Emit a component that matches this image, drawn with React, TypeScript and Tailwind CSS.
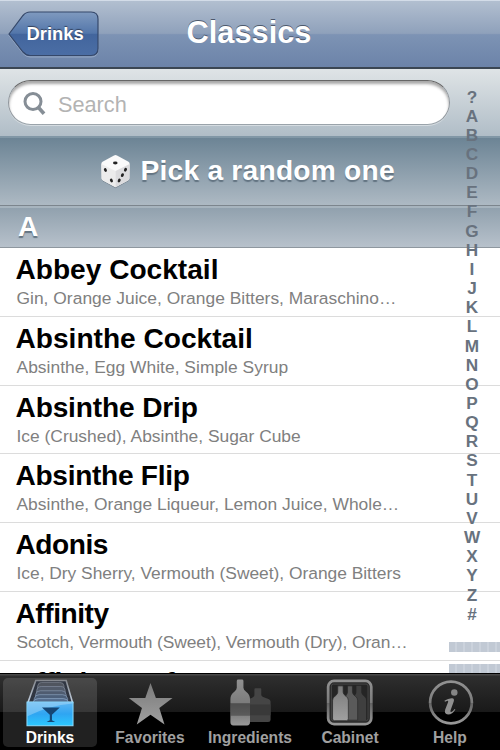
import type { ReactNode } from "react";

const drinks = [
  { name: "Abbey Cocktail", detail: "Gin, Orange Juice, Orange Bitters, Maraschino…", nameClass: "", detailClass: "tracking-[0.02px]" },
  { name: "Absinthe Cocktail", detail: "Absinthe, Egg White, Simple Syrup", nameClass: "", detailClass: "tracking-[0.03px]" },
  { name: "Absinthe Drip", detail: "Ice (Crushed), Absinthe, Sugar Cube", nameClass: "tracking-[-0.15px]", detailClass: "" },
  { name: "Absinthe Flip", detail: "Absinthe, Orange Liqueur, Lemon Juice, Whole…", nameClass: "tracking-[-0.3px]", detailClass: "tracking-[0.02px]" },
  { name: "Adonis", detail: "Ice, Dry Sherry, Vermouth (Sweet), Orange Bitters", nameClass: "tracking-[-0.45px]", detailClass: "tracking-[-0.02px]" },
  { name: "Affinity", detail: "Scotch, Vermouth (Sweet), Vermouth (Dry), Oran…", nameClass: "tracking-[-0.45px]", detailClass: "tracking-[-0.09px]" },
  { name: "Affinity Perfect", detail: "", nameClass: "", detailClass: "" },
];

const letters = "?ABCDEFGHIJKLMNOPQRSTUVWXYZ#".split("");

const DiceIcon = () => (
  <svg width="31" height="35" viewBox="0 0 31 35">
    <path d="M15.5 2 L28.5 8.5 Q29.5 9 29.5 10 L29.3 25 Q29.2 26.5 28 27.3 L15.5 34.3 L3 27.3 Q1.8 26.5 1.7 25 L1.5 10 Q1.5 9 2.5 8.5Z" fill="#59636d" opacity=".5" />
    <path d="M14 1.4 Q15.5 .7 17 1.4 L28.5 7.8 Q29.8 8.6 29.7 10 L29.4 24.2 Q29.3 25.7 28 26.5 L15.5 33.2 L3 26.5 Q1.7 25.7 1.6 24.2 L1.3 10 Q1.2 8.6 2.5 7.8Z" fill="#fafafa" />
    <path d="M1.4 10 L15.5 17 V33.2 L3 26.5 Q1.7 25.7 1.6 24.2Z" fill="#ececec" />
    <path d="M29.6 10 L15.5 17 V33.2 L28 26.5 Q29.3 25.7 29.4 24.2Z" fill="#dcdcde" />
    <g fill="#232323">
      <ellipse cx="15.3" cy="9" rx="2.3" ry="1.4" />
      <ellipse cx="5.4" cy="16" rx="1.4" ry="2" transform="rotate(-25 5.4 16)" />
      <ellipse cx="11.4" cy="26.5" rx="1.4" ry="2" transform="rotate(-25 11.4 26.5)" />
      <ellipse cx="25.5" cy="15.7" rx="1.4" ry="2" transform="rotate(25 25.5 15.7)" />
      <ellipse cx="22.4" cy="21.1" rx="1.4" ry="2" transform="rotate(25 22.4 21.1)" />
      <ellipse cx="19.2" cy="26.5" rx="1.4" ry="2" transform="rotate(25 19.2 26.5)" />
    </g>
  </svg>
);

const DrinksIcon = () => (
  <svg width="50" height="50" viewBox="0 0 50 50">
    <defs>
      <linearGradient id="box" x1="0" y1="0" x2="0" y2="1">
        <stop offset="0" stopColor="#5fb6f2" />
        <stop offset=".5" stopColor="#2fa5f2" />
        <stop offset="1" stopColor="#2bc8ff" />
      </linearGradient>
      <linearGradient id="frame" x1="0" y1="0" x2="0" y2="1">
        <stop offset="0" stopColor="#85888e" />
        <stop offset="1" stopColor="#c3d0e0" />
      </linearGradient>
    </defs>
    <path d="M10.5 1.5 H41.5 L48 24 H2.5Z" fill="#303642" stroke="url(#frame)" strokeWidth="1.6" />
    <path d="M12.5 7 Q13 3.5 16.5 3.5 H35 Q39 3.5 39.3 7 V11 H12Z" fill="#50555f" stroke="#767d89" strokeWidth=".8" />
    <path d="M11.5 12 Q12 7.7 16 7.7 H36 Q40 7.7 40.5 12 V15 H11Z" fill="#525b6a" stroke="#7d8899" strokeWidth=".8" />
    <path d="M10.3 16 Q11 12 15 12 H37 Q41 12 41.5 16 V19 H10Z" fill="#4f5c70" stroke="#8090a6" strokeWidth=".8" />
    <path d="M9 20 Q10 16 14 16 H38 Q42 16 43 20 V24 H8.5Z" fill="#4d607a" stroke="#8298b5" strokeWidth=".8" />
    <path d="M7.5 24 Q9 20 13 20 H38.5 Q43 20 44 24Z" fill="#546c8c" stroke="#8ba3c2" strokeWidth=".8" />
    <rect x="1.5" y="23.5" width="47" height="24.2" fill="url(#box)" stroke="#8dddff" strokeWidth="1" />
    <path d="M2 24 H48 V25 Q24 27 2 38Z" fill="#c0e4fa" opacity=".4" />
    <path d="M16.8 29 H35 L27 36.5 V42 L30.3 43.8 H21.5 L24.8 42 V36.5Z" fill="#154675" />
  </svg>
);

const GrayDefs = () => (
  <defs>
    <linearGradient id="gray" x1="0" y1="0" x2="0" y2="1">
      <stop offset="0" stopColor="#919191" />
      <stop offset=".5" stopColor="#7c7c7c" />
      <stop offset=".52" stopColor="#646464" />
      <stop offset="1" stopColor="#999" />
    </linearGradient>
    <linearGradient id="steel" x1="0" y1="0" x2="0" y2="1">
      <stop offset="0" stopColor="#7a7a7a" />
      <stop offset="1" stopColor="#a0a0a0" />
    </linearGradient>
  </defs>
);

const StarIcon = () => (
  <svg width="50" height="50" viewBox="0 0 50 50">
    <GrayDefs />
    <path d="M25.5 4 L31 19.5 H48 L34.5 29.5 L39.8 46.5 L25.5 36.5 L11.5 46.5 L16.8 29.5 L3.3 19.5 H20.2Z" fill="url(#steel)" />
  </svg>
);

const BottlesIcon = () => (
  <svg width="50" height="50" viewBox="0 0 50 50">
    <path d="M29.5 10.5 Q29.5 9.5 30.5 9.5 H35.5 Q36.5 9.5 36.5 10.5 V16.5 Q37 18 41 19.5 Q46 21 46 23 V41.5 Q46 43.8 43.5 43.8 H25 V20 Q29.2 18.5 29.5 16.5Z" fill="#454545" />
    <path d="M25 26 H46 V37 H25Z" fill="#393939" />
    <path d="M11.5 2 Q11.5 .6 13 .6 H16.8 Q18.3 .6 18.3 2 V9 Q18.3 11 21 13 Q25 16 25 20.5 V44 Q25 47.5 22 47.5 H8 Q5 47.5 5 44 V20.5 Q5 16 9 13 Q11.5 11 11.5 9Z" fill="url(#gray)" />
    <path d="M5 25 H25 V37.5 H5Z" fill="#3d3d3d" opacity=".55" />
  </svg>
);

const CabinetIcon = () => (
  <svg width="50" height="50" viewBox="0 0 50 50">
    <rect x="2.7" y="2" width="44" height="44" rx="6" fill="#292929" stroke="url(#gray)" strokeWidth="2.8" />
    <rect x="6" y="5.2" width="37.4" height="37.4" rx="2" fill="#252525" stroke="#484848" strokeWidth="1" />
    <path d="M31.5 7 H36.5 V13.5 Q36.5 15.5 39.3 17.5 Q41.5 19 41.5 22 V42 H27 V20 Q31.5 16 31.5 13.5Z" fill="#3f3f3f" />
    <path d="M22.5 7 H27.5 V13.5 Q27.5 15.5 30.3 17.5 Q32.8 19 32.8 22 V42 H18 V20 Q22.5 16 22.5 13.5Z" fill="#5a5a5a" stroke="#292929" strokeWidth=".7" />
    <path d="M12.5 7 H18 V13.5 Q18 15.5 20.8 17.5 Q23.3 19 23.3 22 V40.5 Q23.3 42.5 21.5 42.5 H9 Q7.2 42.5 7.2 40.5 V22 Q7.2 19 9.7 17.5 Q12.5 15.5 12.5 13.5Z" fill="url(#steel)" stroke="#292929" strokeWidth=".7" />
  </svg>
);

const InfoIcon = () => (
  <svg width="50" height="50" viewBox="0 0 50 50">
    <circle cx="26" cy="24" r="21.3" fill="none" stroke="url(#gray)" strokeWidth="2.8" />
    <circle cx="29.4" cy="13.8" r="3.3" fill="#858585" />
    <path d="M19.3 22.3 Q23.5 19.3 27.2 19.6 Q29.8 20 28.8 23 L25.6 32 Q25 34 26.3 33.7 Q28 32.8 29.7 30.5 L30.5 31.1 Q27.3 36.3 23 36.2 Q18.7 35.8 20.1 31.2 L23 23.6 Q23.5 22 22.4 22.1 Q21.2 22.3 19.9 23.3Z" fill="#909090" />
  </svg>
);

type TabProps = { label: string; icon: ReactNode; active?: boolean };

const Tab = ({ label, icon, active }: TabProps) => (
  <div className={`flex h-[69px] w-[94px] flex-col items-center rounded-[5px] pt-[1px] ${active ? "bg-white/13 text-white" : "text-[#a0a0a0]"}`}>
    {icon}
    <span className="pt-px text-[15.6px] leading-[18px] font-bold whitespace-nowrap">{label}</span>
  </div>
);

const App = () => {
  return (
    <div className="relative flex h-[750px] w-[500px] flex-col overflow-hidden bg-white font-['Liberation_Sans',Arial,sans-serif]">
      <header className="grid h-[69px] shrink-0 grid-cols-[100px_1fr_100px] border-t border-b-2 border-t-[#d3dce8] border-b-[#3b4653] bg-[linear-gradient(#b2bfd0_0%,#8fa1bb_49%,#7d93b4_51%,#6c83a9_100%)]">
        <div className="relative mt-[10px] ml-[8px] h-[47px] w-[92px]">
          <svg className="absolute inset-0" width="92" height="47" viewBox="0 0 92 47">
            <defs>
              <linearGradient id="back" x1="0" y1="0" x2="0" y2="1">
                <stop offset="0" stopColor="#7f9abf" />
                <stop offset=".49" stopColor="#5376aa" />
                <stop offset=".51" stopColor="#42659d" />
                <stop offset="1" stopColor="#4b6ea5" />
              </linearGradient>
            </defs>
            <path d="M1 24.5 L15 5.5 Q18 2 22 2 H83 Q90 2 90 9 V39 Q90 46 83 46 H22 Q18 46 15 42.5Z" fill="none" stroke="#a6b7cf" opacity=".7" />
            <path d="M1 23 L15 4.5 Q18 1 22 1 H83 Q90 1 90 8 V37.5 Q90 44.5 83 44.5 H22 Q18 44.5 15 41Z" fill="url(#back)" stroke="#35486a" strokeWidth="1.2" />
          </svg>
          <span className="relative block pt-[12px] pl-[18.5px] text-[18.4px] leading-[22px] font-bold text-white [text-shadow:0_-1px_1px_#33415c]">Drinks</span>
        </div>
        <h1 className="pt-[14px] pr-[2px] text-center text-[30.8px] leading-[36px] font-bold text-white [text-shadow:0_-1.5px_0_#4d596c]">Classics</h1>
      </header>

      <div className="h-[67px] shrink-0 bg-[linear-gradient(#dfe4e6,#b0bdc7)] pt-[11px] pl-[8px]">
        <div className="flex h-[45px] w-[442px] items-center rounded-full border border-t-[#666] border-r-[#8e959b] border-b-[#9aa3aa] border-l-[#8e959b] bg-white pl-[14px] shadow-[inset_0_3px_3px_rgba(0,0,0,0.35),0_1px_0_#d5dce1]">
          <svg className="mt-[3px]" width="24" height="26" viewBox="0 0 24 26" fill="none" stroke="#868e96">
            <circle cx="10" cy="10.5" r="8" strokeWidth="3" />
            <path d="M15.5 16.5 L21 22.8" strokeWidth="3.6" />
          </svg>
          <span className="pt-[4px] pl-[11px] text-[21.7px] leading-[26px] text-[#b3b3b3]">Search</span>
        </div>
      </div>

      <div className="flex h-[70px] shrink-0 items-center border-t-2 border-b border-t-[#8197a6] border-b-[#7c858d] bg-[linear-gradient(#6c8495,#adb9c3)] pl-[100px]">
        <DiceIcon />
        <span className="pb-[3px] pl-[9.5px] text-[28.2px] leading-[32px] font-bold tracking-[0.22px] text-white [text-shadow:0_1.5px_1px_#637482]">Pick a random one</span>
      </div>
      <div className="h-[42px] shrink-0 border-t-2 border-b border-t-[#a7b4be] border-b-[#8e979f] bg-[linear-gradient(#91a1ae,#b7c1cb)] pt-px pl-[18px] text-[28.2px] leading-[34px] font-bold text-white [text-shadow:0_1.5px_1px_#637482]">A</div>

      <ul className="h-[425px] shrink-0 overflow-hidden">
        {drinks.map((drink) => (
          <li key={drink.name} className="h-[68.75px] border-b border-[#dcdcdc] pt-[6px] pl-[15.5px]">
            <p className={`text-[28.1px] leading-[32px] font-bold whitespace-nowrap text-black ${drink.nameClass}`}>{drink.name}</p>
            <p className={`pt-[2px] pl-px text-[17.4px] leading-[20px] whitespace-nowrap text-[#808080] ${drink.detailClass}`}>{drink.detail}</p>
          </li>
        ))}
      </ul>

      {/* letter index floats over the list */}
      <div className="absolute top-[87.5px] right-[18px] flex w-[20px] flex-col items-center text-[17.2px] leading-[19.15px] font-bold text-[#68727e]">
        {letters.map((letter) => (
          <span key={letter}>{letter}</span>
        ))}
      </div>
      <div className="absolute top-[642px] right-0 flex h-[32px] w-[51px] flex-col justify-between">
        <div className="h-[10px] bg-[repeating-linear-gradient(90deg,#c1c9d4_0_6px,#cbd2dc_6px_8px)]" />
        <div className="h-[10px] bg-[repeating-linear-gradient(90deg,#c1c9d4_0_6px,#cbd2dc_6px_8px)]" />
      </div>

      <nav className="absolute bottom-0 left-0 flex h-[77px] w-full justify-between border-t border-black bg-[linear-gradient(#484848_0,#484848_1px,#2e2e2e_2px,#191919_38px,#000_38px)] px-[3px] pt-[4px]">
        <Tab label="Drinks" icon={<DrinksIcon />} active />
        <Tab label="Favorites" icon={<StarIcon />} />
        <Tab label="Ingredients" icon={<BottlesIcon />} />
        <Tab label="Cabinet" icon={<CabinetIcon />} />
        <Tab label="Help" icon={<InfoIcon />} />
      </nav>
    </div>
  );
};

export default App;
